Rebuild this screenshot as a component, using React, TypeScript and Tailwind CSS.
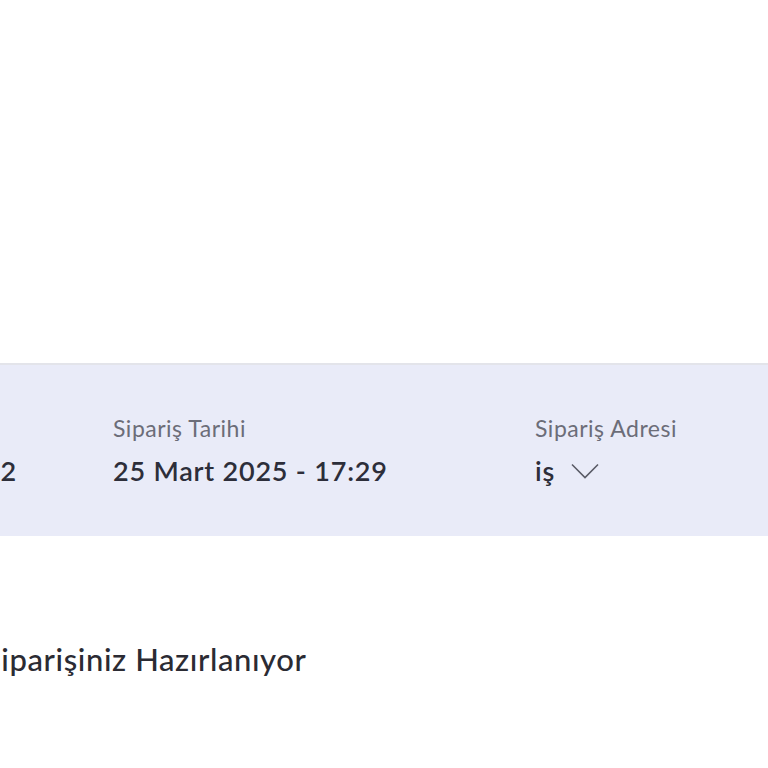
export default function App() {
    return (
        <div className="w-[768px] h-[768px] overflow-hidden bg-white font-['Lato',sans-serif]">
            <div className="h-[363px]" />
            <div className="border-t-2 border-[#e3e4ea] bg-[#e9ebf8]">
                <div className="flex ml-[-200px] pt-[49px] pb-[48px]">
                    <div className="w-[217px] shrink-0 flex flex-col">
                        <p className="text-[23px] leading-[28px] tracking-[0.5px] text-[#6c6d78]">Sipariş No</p>
                        <p className="mt-3 text-[27px] leading-[34px] tracking-[0.8px] font-semibold text-[#2d2e3a] text-right">#48201962</p>
                    </div>
                    <div className="ml-[96px] w-[422px] shrink-0 flex flex-col">
                        <p className="text-[23px] leading-[28px] tracking-[0.5px] text-[#6c6d78]">Sipariş Tarihi</p>
                        <p className="mt-3 text-[27px] leading-[34px] tracking-[0.8px] font-semibold text-[#2d2e3a]">25 Mart 2025 - 17:29</p>
                    </div>
                    <div className="w-[300px] shrink-0 flex flex-col">
                        <p className="text-[23px] leading-[28px] tracking-[0.5px] text-[#6c6d78]">Sipariş Adresi</p>
                        <div className="mt-3 flex items-center gap-[16px]">
                            <span className="text-[27px] leading-[34px] tracking-[0.8px] font-semibold text-[#2d2e3a]">iş</span>
                            <svg width="28" height="16" viewBox="0 0 28 16" fill="none">
                                <path d="M1 1.5L14 14.5L27 1.5" stroke="#5a5b66" strokeWidth="1.6" />
                            </svg>
                        </div>
                    </div>
                </div>
            </div>
            <h2 className="mt-[104px] ml-[-16px] text-[31px] leading-[38px] tracking-[0.6px] font-medium text-[#2b2b33]">Siparişiniz Hazırlanıyor</h2>
        </div>
    );
}
